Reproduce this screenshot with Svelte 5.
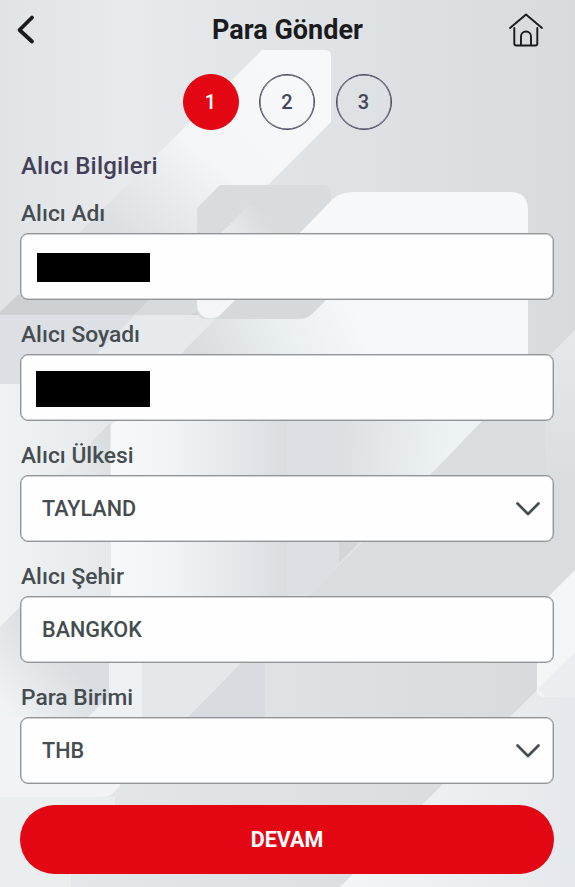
<script lang="ts">
	const title = 'Para Gönder';
	const steps = [1, 2, 3];
	let current = $state(1);

	const fields = [
		{ id: 'name', label: 'Alıcı Adı', hidden: 'name' },
		{ id: 'surname', label: 'Alıcı Soyadı', hidden: 'surname' },
		{ id: 'country', label: 'Alıcı Ülkesi', value: 'TAYLAND', select: true },
		{ id: 'city', label: 'Alıcı Şehir', value: 'BANGKOK' },
		{ id: 'currency', label: 'Para Birimi', value: 'THB', select: true }
	];
</script>

<div class="page">
	<svg class="backdrop" viewBox="0 0 575 887" aria-hidden="true">
		<defs>
			<linearGradient id="base" x1="0" y1="0" x2="1" y2="0">
				<stop offset="0" stop-color="#e0e4e7" />
				<stop offset="0.22" stop-color="#e8eaec" />
				<stop offset="0.5" stop-color="#e0e4e7" />
				<stop offset="1" stop-color="#d7dbde" />
			</linearGradient>
			<linearGradient id="band" gradientUnits="userSpaceOnUse" x1="290" y1="80" x2="140" y2="250">
				<stop offset="0" stop-color="#f7f8fa" />
				<stop offset="0.5" stop-color="#f3f5f7" />
				<stop offset="1" stop-color="#dce0e2" />
			</linearGradient>
			<linearGradient id="peak" gradientUnits="userSpaceOnUse" x1="230" y1="230" x2="262" y2="212">
				<stop offset="0" stop-color="#e6e9eb" />
				<stop offset="1" stop-color="#d8dcde" />
			</linearGradient>
			<linearGradient id="card" gradientUnits="userSpaceOnUse" x1="200" y1="370" x2="350" y2="300">
				<stop offset="0" stop-color="#d8dcdf" />
				<stop offset="0.55" stop-color="#eaeff1" />
				<stop offset="1" stop-color="#f6f8fa" />
			</linearGradient>
			<linearGradient id="column" x1="0" y1="0" x2="1" y2="0">
				<stop offset="0" stop-color="#f6f8fa" />
				<stop offset="0.35" stop-color="#f1f4f6" />
				<stop offset="0.8" stop-color="#e1e4e8" />
				<stop offset="1" stop-color="#d8dde0" />
			</linearGradient>
			<linearGradient id="left" x1="0" y1="0" x2="1" y2="0">
				<stop offset="0" stop-color="#f0f3f4" />
				<stop offset="1" stop-color="#e2e5e8" />
			</linearGradient>
			<linearGradient id="fold" gradientUnits="userSpaceOnUse" x1="112" y1="440" x2="70" y2="455">
				<stop offset="0" stop-color="#d9dcdf" />
				<stop offset="1" stop-color="#e8ebed" />
			</linearGradient>
			<linearGradient id="shade" gradientUnits="userSpaceOnUse" x1="60" y1="650" x2="0" y2="700">
				<stop offset="0" stop-color="#dadde1" />
				<stop offset="1" stop-color="#f0f3f4" />
			</linearGradient>
			<linearGradient id="wedge" gradientUnits="userSpaceOnUse" x1="340" y1="430" x2="450" y2="440">
				<stop offset="0" stop-color="#dce0e3" />
				<stop offset="1" stop-color="#edf2f4" />
			</linearGradient>
			<linearGradient id="lower" x1="0" y1="0" x2="1" y2="0">
				<stop offset="0" stop-color="#e4e7ea" />
				<stop offset="1" stop-color="#d8dbde" />
			</linearGradient>
			<linearGradient id="corner" x1="0" y1="0" x2="1" y2="0">
				<stop offset="0" stop-color="#f3f6f7" />
				<stop offset="1" stop-color="#e5e8ec" />
			</linearGradient>
			<linearGradient id="side" x1="0" y1="0" x2="0" y2="1">
				<stop offset="0" stop-color="#e5e9eb" />
				<stop offset="1" stop-color="#dadde0" />
			</linearGradient>
		</defs>
		<rect width="575" height="887" fill="url(#base)" />
		<path d="M262 50H325Q331 50 331 56V122L200 253V300H12L80 232Z" fill="url(#band)" />
		<path d="M0 312 18 295H200V315H0Z" fill="#ced1d3" />
		<path d="M150 299H200V311L190 315H134Z" fill="#d8dbdd" />
		<path d="M0 315H136L67 384H0Z" fill="#dcdfe4" />
		<path d="M135 315H250V384H67Z" fill="#e6eaec" />
		<path d="M220 185H322Q331 185 331 194V298L316 313Q310 319 300 319H206Q197 319 197 310V211Q197 208 199 206Z" fill="#d8dcde" />
		<path d="M220 234 250 204 300 234Z" fill="url(#peak)" />
		<path d="M355 192H510Q528 192 528 210V387L430 475H180V355L333 199Q340 192 355 192Z" fill="url(#card)" />
		<path d="M236 299H327L312 314Q307 319 298 319H216Z" fill="#d5d9db" />
		<path d="M197 299H236L219 316Q212 320 204 317 197 313 197 305Z" fill="#f3f5f7" />
		<path d="M0 384H150V797H0Z" fill="url(#left)" />
		<path d="M110 423V475H60Z" fill="url(#fold)" />
		<path d="M111 425 116 421H288V717H111Z" fill="url(#column)" />
		<path d="M287 421H482L430 475 310 595H287Z" fill="url(#wedge)" />
		<path d="M287 421H339V564L309 595H287Z" fill="#dce0e4" />
		<path d="M482 421H575V717H265V640L310 595 430 475Z" fill="#dadde0" />
		<path d="M339 541H361L339 563Z" fill="#d3d7da" />
		<path d="M575 330V490H545V360Z" fill="url(#side)" />
		<path d="M0 627 30 597H109V697L88 717H0Z" fill="url(#shade)" />
		<path d="M109 662H242L188 717H88L109 697Z" fill="#eef1f3" />
		<path d="M142 662H242L188 717H142Z" fill="#e5e8eb" />
		<path d="M242 662H265V717H188Z" fill="#d8dbdf" />
		<path d="M265 662H537V887H71V797H110L188 717H265Z" fill="url(#lower)" />
		<path d="M0 717H120V786L112 794Q108 797 100 797H0Z" fill="#f1f3f5" />
		<path d="M0 797H115V874H71V887H0Z" fill="#eaeeef" />
		<path d="M537 690 575 652V887H340Z" fill="url(#corner)" />
		<path d="M575 570V697H545Q537 697 537 690V608Z" fill="#f3f6f7" />
		<path d="M575 652V697H545L538 689Z" fill="#ebeef0" />
	</svg>

	<header class="header">
		<button class="icon-button" aria-label="Geri">
			<svg width="20" height="32" viewBox="0 0 20 32">
				<path d="M17 3.500 4.500 16 17 27.500" stroke-width="3.800" />
			</svg>
		</button>
		<h1>{title}</h1>
		<button class="icon-button" aria-label="Ana sayfa">
			<svg width="36" height="36" viewBox="0 0 36 36">
				<path d="M2 16 18 2.500 34 16M6.300 16v15.500q0 2 2 2h19q2 0 2-2V16M13 33v-8.500a5 5 0 0 1 10 0V33" stroke-width="1.900" />
			</svg>
		</button>
	</header>

	<nav class="steps">
		{#each steps as step}
			<button class="step" class:step--active={step === current} onclick={() => (current = step)}>
				<span>{step}</span>
			</button>
		{/each}
	</nav>

	<main>
		<h2>Alıcı Bilgileri</h2>
		{#each fields as field (field.id)}
			<div class="field">
				<span class="field__label">{field.label}</span>
				<div class="field__box">
					{#if field.hidden}
						<span class="mask mask--{field.hidden}"></span>
					{:else}
						<span class="field__value">{field.value}</span>
					{/if}
					{#if field.select}
						<svg class="chevron" width="26" height="16" viewBox="0 0 26 16">
							<path d="M2.500 2.500 13 13 23.500 2.500" stroke-width="2.700" />
						</svg>
					{/if}
				</div>
			</div>
		{/each}
		<button class="submit">DEVAM</button>
	</main>
</div>

<style>
	:global(body) {
		margin: 0;
	}

	.page {
		position: relative;
		isolation: isolate;
		box-sizing: border-box;
		width: 575px;
		height: 887px;
		overflow: hidden;
		color: #454d50;
		font-family: Roboto, 'Liberation Sans', sans-serif;
		font-weight: 500;
	}

	.backdrop {
		position: absolute;
		inset: 0;
		z-index: -1;
		width: 575px;
		height: 887px;
	}

	button {
		padding: 0;
		border: none;
		background: none;
		font: inherit;
		color: inherit;
		cursor: pointer;
	}

	h1,
	h2 {
		margin: 0;
	}

	.header {
		display: grid;
		grid-template-columns: 60px 1fr 60px;
		align-items: center;
		height: 60px;
		padding: 0 15px;
	}

	.header h1 {
		color: #1b1b1d;
		font-size: 27px;
		font-weight: 700;
		line-height: 60px;
		text-align: center;
	}

	.icon-button {
		display: flex;
		color: #1b1b1d;
	}

	.icon-button:last-child {
		justify-content: flex-end;
		padding-right: 16px;
	}

	svg path[stroke-width] {
		fill: none;
		stroke: currentColor;
		stroke-linecap: round;
		stroke-linejoin: round;
	}

	.steps {
		display: flex;
		justify-content: center;
		gap: 20.5px;
		padding: 14px 1px 0 0;
	}

	.step {
		display: grid;
		place-items: center;
		box-sizing: border-box;
		width: 56px;
		height: 56px;
		border: 1px solid #45455a;
		border-radius: 50%;
		box-shadow: inset 0 0 0 0.5px #45455a;
		color: #45455a;
		font-size: 20px;
	}

	.step--active {
		border-color: #e30613;
		background: #e30613;
		box-shadow: none;
		color: #fff;
	}

	main {
		padding: 18px 21px 0 20px;
	}

	h2 {
		height: 44px;
		padding-left: 1px;
		color: #443f58;
		font-size: 24px;
		font-weight: 500;
		letter-spacing: 0.2px;
		line-height: 36px;
	}

	.field {
		height: 121px;
	}

	.field__label {
		display: block;
		height: 41px;
		padding-left: 1px;
		font-size: 22.8px;
		line-height: 44px;
	}

	.field__box {
		display: flex;
		align-items: center;
		justify-content: space-between;
		box-sizing: border-box;
		height: 67px;
		padding: 0 12px 0 21px;
		border: 1px solid #929699;
		border-radius: 8px;
		background: #fefefe;
		box-shadow: inset 0 0 0 0.5px #a4a7aa;
	}

	.field__value {
		font-size: 21.6px;
	}

	.mask {
		width: 113px;
		height: 29px;
		margin: 2px 0 0 -5px;
		background: #000;
	}

	.mask--surname {
		width: 114px;
		height: 36px;
		margin-left: -6px;
	}

	.submit {
		display: block;
		width: 100%;
		height: 69px;
		margin-top: 8px;
		border-radius: 35px;
		background: #e30613;
		color: #fff;
		font-size: 21.5px;
		font-weight: 700;
		line-height: 70px;
	}
</style>
